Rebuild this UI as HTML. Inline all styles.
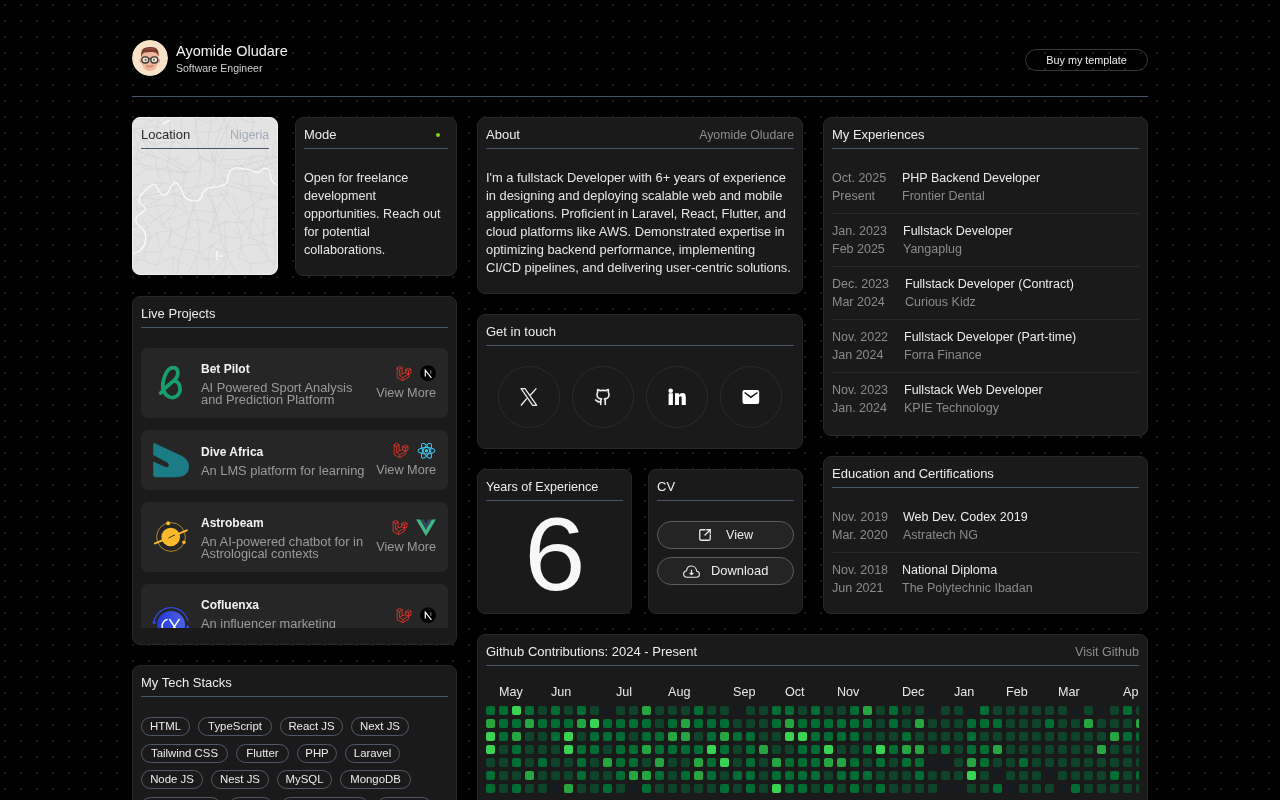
<!DOCTYPE html>
<html><head><meta charset="utf-8">
<style>
*{box-sizing:border-box;margin:0;padding:0}
html,body{width:1280px;height:800px;overflow:hidden;background:#000}
body{position:relative;will-change:transform;font-family:"Liberation Sans",sans-serif;color:#ececec;
background-image:linear-gradient(#000,#000);}
#dots{position:absolute;left:0;top:0;width:1280px;height:800px;
background-image:radial-gradient(circle at 5px 5px,#1b1b1b 0,#1b1b1b 1px,transparent 1.4px);
background-size:16px 16px}
.abs{position:absolute}
.card{position:absolute;background:#1a1a1a;border:1px solid #272727;border-radius:8px;overflow:hidden}
.hd{position:absolute;left:8px;right:8px;top:8px;height:23px;border-bottom:1px solid #4b5669;
font-size:13px;line-height:18px;display:flex;justify-content:space-between;white-space:nowrap}
.hd .r{color:#8d8d8d;font-size:12.3px}
.body{font-size:12.7px;line-height:18px;color:#e6e6e6;white-space:nowrap}
.gray{color:#8b8b8b}
.plist{position:absolute;left:8px;top:51px;width:307px;height:280px;overflow:hidden}
.pitem{position:relative;background:#262626;border-radius:7px;margin-bottom:12px;display:flex;align-items:center;white-space:nowrap}
.plogo{position:absolute;left:12px;top:50%;width:36px;height:36px;margin-top:-18px;display:flex;align-items:center;justify-content:center}
.plogo svg{flex:none}
.ptxt{position:absolute;left:60px;top:50%;transform:translateY(-50%)}
.pt{font-weight:700;font-size:12px;line-height:16px;color:#f2f2f2;margin-bottom:4.4px}
.pd{position:relative;top:0.9px;font-size:12.85px;line-height:12px;color:#9b9b9b}
.pr{position:absolute;right:12px;top:50%;transform:translateY(-50%);display:flex;flex-direction:column;align-items:flex-end}
.picons{display:flex;gap:8px;height:16px;align-items:center;margin-bottom:3.6px}
.vm{font-size:12.7px;line-height:16px;color:#9b9b9b}
.chip{position:absolute;height:19px;border:1px solid #4e5869;border-radius:10px;font-size:11.4px;line-height:17px;text-align:center;color:#ececec;white-space:nowrap}
.soc{position:absolute;top:51px;width:62px;height:62px;border:1px solid #2b2b2b;border-radius:50%}
.soc svg{position:absolute}
.cvb{position:absolute;left:8px;width:137px;height:28px;border:1px solid #5c5c5c;border-radius:14px;background:#242424;font-size:12.6px;line-height:26px;color:#ededed;white-space:nowrap}
.cvb svg,.cvb span{position:absolute}
.row{position:absolute;left:8px;right:8px;height:53px;padding-top:8px;display:flex;font-size:12.5px;line-height:18px;white-space:nowrap}
.row .d{color:#8b8b8b;flex:none}
.row .t{color:#ececec}
</style></head><body>
<div id="dots"></div>

<!-- header -->
<div class="abs" style="left:132px;top:40px;width:36px;height:36px;border-radius:50%;overflow:hidden"><svg width="36" height="36" viewBox="0 0 36 36" style="position:absolute;left:0;top:0">
<circle cx="18" cy="18" r="18" fill="#f9e3c8"/>
<g transform="translate(-1,-0.8)">
<ellipse cx="10" cy="21.5" rx="1.5" ry="2.3" fill="#e6a086"/>
<ellipse cx="27.6" cy="21.5" rx="1.5" ry="2.3" fill="#e6a086"/>
<path d="M10.6 15.5C10.6 11.8 13.6 10.4 18.6 10.4C23.6 10.4 27 12 27 16V22C27 27.5 23.4 31.8 18.8 31.8C14.2 31.8 10.6 27.6 10.6 22Z" fill="#f0b69b"/>
<path d="M15 29.6C17.5 31.2 20.5 31.2 22.6 29.6C21 31.6 16.6 31.6 15 29.6Z" fill="#e39c83"/>
<path d="M10.4 18.6C9.6 13.2 10.8 10 13.4 8.8C16.8 7.4 22 7.6 24.8 8.8C27.4 10.2 28 13.4 27.6 17.8C26.8 14.6 25.6 13.6 24.2 13.2C20.6 12.6 16.8 12.8 13.8 13.4C12 13.8 11 15.4 10.4 18.6Z" fill="#7b3b2c"/>
<path d="M12.6 10.6C15.6 8.6 21.6 8.4 25 10.2C21.6 9.8 16.6 10 12.6 10.6Z" fill="#9a5240"/>
<ellipse cx="14.2" cy="20.6" rx="2.6" ry="2" fill="#f6ede6"/><ellipse cx="23.4" cy="20.6" rx="2.6" ry="2" fill="#f6ede6"/>
<circle cx="14.6" cy="20.6" r="1.1" fill="#4f6a45"/><circle cx="23" cy="20.6" r="1.1" fill="#4f6a45"/>
<rect x="10.8" y="17.6" width="7" height="6.2" rx="3" fill="none" stroke="#3a3e43" stroke-width="1.3"/>
<rect x="19.8" y="17.6" width="7" height="6.2" rx="3" fill="none" stroke="#3a3e43" stroke-width="1.3"/>
<path d="M17.8 19.4H19.8" stroke="#3a3e43" stroke-width="1.2"/>
<path d="M15.4 26.6C17.4 28.2 20.2 28.2 22.2 26.6C20.2 27.1 17.4 27.1 15.4 26.6Z" fill="#fff" stroke="#b65d4b" stroke-width="0.7"/>
</g></svg></div>
<div class="abs" style="left:176px;top:42px;font-size:14.5px;line-height:18px;color:#f2f2f2;white-space:nowrap">Ayomide Oludare</div>
<div class="abs" style="left:176px;top:61px;font-size:10.5px;line-height:14px;color:#cfcfcf;white-space:nowrap">Software Engineer</div>
<div class="abs" style="left:1025px;top:49px;width:123px;height:22px;border:1px solid #3a3a3a;border-radius:11px;font-size:10.8px;line-height:20px;text-align:center;color:#ededed">Buy my template</div>
<div class="abs" style="left:132px;top:96px;width:1016px;height:1px;background:#4b5669"></div>

<!-- Location -->
<div class="card" style="left:132px;top:117px;width:146px;height:158px;background:#e4e4e4;border-color:#f0f0f0">
<svg width="146" height="158" viewBox="133 118 146 158" style="position:absolute;left:0;top:0">
<rect x="133" y="118" width="146" height="158" fill="#e3e3e3"/>
<path d="M119.5 105.6Q123.6 109.4 124.2 117.7M124.2 117.7Q125.7 116.8 133.0 119.6M124.2 117.7Q124.6 127.6 120.1 131.9M124.2 117.7Q128.4 124.8 132.6 128.8M120.1 131.9Q124.5 127.8 132.6 128.8M120.1 131.9Q115.7 138.3 116.8 144.1M116.8 144.1Q125.5 144.8 138.0 149.0M121.3 159.9Q126.2 162.2 136.4 159.1M121.3 159.9Q120.2 162.9 115.9 168.0M115.9 168.0Q124.2 164.7 131.2 167.3M115.9 168.0Q118.0 175.2 115.9 186.1M115.9 186.1Q121.6 180.4 130.9 178.7M115.9 186.1Q116.0 191.1 121.9 191.4M121.9 191.4Q122.8 203.1 124.8 213.6M124.8 213.6Q125.6 219.9 121.5 223.2M121.5 223.2Q131.9 226.6 137.6 225.5M121.5 223.2Q120.7 228.2 116.6 230.2M116.6 230.2Q121.3 230.9 128.0 232.1M116.6 230.2Q117.6 237.7 120.3 243.6M120.3 243.6Q117.6 252.0 116.9 258.4M116.9 258.4Q130.4 260.1 137.8 260.0M116.9 258.4Q117.7 268.9 115.3 273.6M116.9 258.4Q123.5 268.3 128.7 275.3M115.3 273.6Q119.3 272.6 128.7 275.3M115.3 273.6Q114.9 280.5 119.4 290.4M119.4 290.4Q130.4 288.0 135.8 284.7M133.2 106.4Q139.4 102.3 141.9 103.3M133.2 106.4Q134.6 110.3 133.0 119.6M133.0 119.6Q141.6 118.1 150.6 120.6M133.0 119.6Q133.5 121.6 132.6 128.8M132.6 128.8Q138.0 127.8 142.2 128.5M132.6 128.8Q136.2 139.2 138.0 149.0M138.0 149.0Q137.1 142.7 142.0 139.6M138.0 149.0Q135.1 155.5 136.4 159.1M136.4 159.1Q140.0 159.4 149.0 153.8M136.4 159.1Q143.9 163.9 146.6 169.5M131.2 167.3Q131.2 175.6 130.9 178.7M130.9 178.7Q139.5 173.8 146.6 169.5M135.7 195.0Q136.3 196.4 142.3 197.4M135.7 195.0Q135.7 202.4 136.5 207.9M136.5 207.9Q138.8 209.7 142.2 208.2M136.5 207.9Q140.0 219.4 137.6 225.5M137.6 225.5Q142.7 224.3 143.1 219.7M137.6 225.5Q131.9 227.4 128.0 232.1M128.0 232.1Q140.2 236.6 150.7 238.0M128.0 232.1Q131.0 242.8 137.1 247.7M137.1 247.7Q137.9 248.4 144.0 251.8M137.1 247.7Q138.2 251.5 137.8 260.0M137.1 247.7Q141.4 243.9 150.7 238.0M137.8 260.0Q141.2 259.2 143.1 259.9M137.8 260.0Q131.5 266.7 128.7 275.3M128.7 275.3Q136.9 277.2 149.5 275.4M128.7 275.3Q133.9 278.3 135.8 284.7M141.9 103.3Q151.9 101.9 156.1 102.6M141.9 103.3Q147.7 114.5 150.6 120.6M150.6 120.6Q153.8 120.7 161.7 116.3M150.6 120.6Q143.9 124.9 142.2 128.5M142.2 128.5Q151.2 125.1 157.0 126.7M142.2 128.5Q143.1 131.5 142.0 139.6M142.0 139.6Q147.2 140.1 154.9 144.8M142.0 139.6Q146.8 145.9 149.0 153.8M142.0 139.6Q150.5 149.2 156.4 158.0M146.6 169.5Q151.1 168.9 157.7 169.5M142.9 185.3Q152.4 183.3 163.6 182.8M142.9 185.3Q141.9 189.5 142.3 197.4M142.3 197.4Q153.0 198.9 159.7 199.7M142.3 197.4Q143.8 205.1 142.2 208.2M142.3 197.4Q153.0 190.4 163.6 182.8M142.2 208.2Q151.8 207.8 155.8 205.5M142.2 208.2Q152.9 218.4 163.1 225.2M142.2 208.2Q148.4 205.4 159.7 199.7M143.1 219.7Q147.7 226.7 150.7 238.0M150.7 238.0Q151.9 236.6 156.5 231.9M150.7 238.0Q149.0 244.3 144.0 251.8M144.0 251.8Q152.7 252.4 161.4 252.4M144.0 251.8Q144.8 258.4 143.1 259.9M143.1 259.9Q151.7 264.6 156.0 265.5M149.5 275.4Q156.3 276.5 162.8 275.0M142.0 291.9Q151.6 290.4 158.2 283.0M156.1 102.6Q160.0 105.7 167.4 109.6M156.1 102.6Q161.7 106.8 161.7 116.3M161.7 116.3Q166.4 119.8 169.4 120.0M161.7 116.3Q156.7 121.3 157.0 126.7M157.0 126.7Q160.9 128.6 169.6 134.2M157.0 126.7Q154.3 137.1 154.9 144.8M154.9 144.8Q162.6 141.4 173.0 141.9M156.4 158.0Q155.6 166.1 157.7 169.5M157.7 169.5Q165.4 168.3 167.7 167.3M157.7 169.5Q158.0 178.9 163.6 182.8M163.6 182.8Q168.2 183.3 172.6 186.5M159.7 199.7Q166.3 196.0 173.1 193.8M155.8 205.5Q163.9 204.7 176.2 206.0M155.8 205.5Q161.7 215.5 163.1 225.2M163.1 225.2Q165.3 220.3 167.2 219.7M163.1 225.2Q169.2 230.0 171.5 230.6M156.5 231.9Q162.6 232.6 171.5 230.6M156.5 231.9Q158.8 242.0 161.4 252.4M161.4 252.4Q160.4 258.5 156.0 265.5M161.4 252.4Q168.4 239.8 171.5 230.6M156.0 265.5Q164.5 259.4 172.7 257.3M162.8 275.0Q165.6 276.3 170.6 277.9M162.8 275.0Q159.7 280.2 158.2 283.0M162.8 275.0Q169.2 281.6 176.8 288.6M167.4 109.6Q176.4 109.0 186.9 105.8M167.4 109.6Q168.8 114.6 169.4 120.0M167.4 109.6Q177.3 113.3 181.4 113.4M169.4 120.0Q176.1 115.4 181.4 113.4M169.4 120.0Q169.7 125.9 169.6 134.2M169.6 134.2Q173.4 132.9 180.2 135.1M169.6 134.2Q170.2 140.8 173.0 141.9M173.0 141.9Q181.9 142.8 187.0 148.6M173.0 141.9Q168.4 151.6 168.8 159.2M173.0 141.9Q176.0 140.5 180.2 135.1M168.8 159.2Q172.0 157.1 180.2 158.4M168.8 159.2Q166.0 162.7 167.7 167.3M168.8 159.2Q179.3 165.3 184.8 172.3M167.7 167.3Q177.9 171.7 184.8 172.3M167.7 167.3Q169.1 176.4 172.6 186.5M167.7 167.3Q174.8 178.8 183.2 188.0M172.6 186.5Q173.5 187.3 173.1 193.8M173.1 193.8Q174.6 194.4 180.8 196.5M173.1 193.8Q176.4 201.9 176.2 206.0M173.1 193.8Q179.8 193.3 183.2 188.0M176.2 206.0Q180.9 209.5 187.4 213.0M176.2 206.0Q173.0 215.8 167.2 219.7M167.2 219.7Q172.0 225.9 171.5 230.6M167.2 219.7Q175.7 216.8 187.4 213.0M171.5 230.6Q178.7 237.5 187.9 239.2M171.5 230.6Q169.9 236.4 168.8 246.7M171.5 230.6Q181.8 227.6 187.4 224.0M168.8 246.7Q176.5 246.9 183.5 249.9M172.7 257.3Q178.6 263.0 189.0 264.7M172.7 257.3Q174.1 266.1 170.6 277.9M170.6 277.9Q177.7 274.9 184.2 276.9M170.6 277.9Q171.8 286.2 176.8 288.6M176.8 288.6Q183.7 289.6 188.6 287.7M186.9 105.8Q194.9 101.9 199.2 103.8M186.9 105.8Q184.0 107.5 181.4 113.4M181.4 113.4Q188.2 116.3 198.8 119.1M181.4 113.4Q181.2 123.2 180.2 135.1M181.4 113.4Q191.4 106.5 199.2 103.8M180.2 135.1Q183.4 141.3 187.0 148.6M184.8 172.3Q195.0 171.7 200.4 170.8M184.8 172.3Q183.6 182.6 183.2 188.0M184.8 172.3Q193.9 166.5 200.3 155.9M183.2 188.0Q190.9 188.7 197.4 186.4M183.2 188.0Q182.5 189.6 180.8 196.5M183.2 188.0Q188.2 193.3 193.8 198.5M180.8 196.5Q188.5 197.6 193.8 198.5M180.8 196.5Q182.9 204.1 187.4 213.0M180.8 196.5Q191.5 194.2 197.4 186.4M187.4 213.0Q192.5 211.0 193.3 210.0M187.4 224.0Q195.0 219.3 197.8 219.3M187.4 224.0Q193.9 232.2 200.0 235.0M187.4 224.0Q188.8 215.8 193.3 210.0M187.9 239.2Q191.3 239.4 200.0 235.0M183.5 249.9Q188.6 248.2 199.1 252.2M184.2 276.9Q192.6 278.7 196.0 275.8M184.2 276.9Q188.4 281.4 188.6 287.7M184.2 276.9Q192.1 269.5 195.6 256.1M188.6 287.7Q192.6 283.9 195.0 283.7M199.2 103.8Q204.8 106.6 215.1 106.6M199.2 103.8Q201.4 113.7 198.8 119.1M198.8 119.1Q205.8 123.1 210.4 121.9M198.8 119.1Q193.8 124.1 193.8 132.4M193.8 132.4Q199.6 130.9 209.3 132.7M193.8 132.4Q200.1 139.3 202.9 147.8M202.9 147.8Q203.8 144.4 208.0 143.3M200.3 155.9Q204.7 161.4 214.1 161.1M200.3 155.9Q200.5 163.5 200.4 170.8M200.3 155.9Q208.1 161.1 214.8 168.8M200.4 170.8Q197.6 180.1 197.4 186.4M197.4 186.4Q202.7 186.2 211.8 181.2M197.4 186.4Q202.2 192.7 207.4 196.0M193.8 198.5Q191.6 204.6 193.3 210.0M193.3 210.0Q205.5 211.4 214.4 212.5M193.3 210.0Q197.6 215.8 197.8 219.3M197.8 219.3Q207.1 220.9 213.1 226.5M197.8 219.3Q197.3 226.8 200.0 235.0M200.0 235.0Q199.5 241.9 199.1 252.2M199.1 252.2Q205.4 250.3 210.5 245.8M199.1 252.2Q199.6 252.2 195.6 256.1M199.1 252.2Q200.7 256.1 208.1 260.1M195.6 256.1Q200.4 259.9 208.1 260.1M195.6 256.1Q198.2 266.4 196.0 275.8M196.0 275.8Q202.0 273.7 212.3 273.9M196.0 275.8Q194.4 280.5 195.0 283.7M195.0 283.7Q199.6 289.0 209.2 290.4M195.0 283.7Q202.2 276.8 212.3 273.9M215.1 106.6Q223.9 107.3 228.8 104.5M215.1 106.6Q212.2 113.4 210.4 121.9M210.4 121.9Q209.8 128.9 209.3 132.7M210.4 121.9Q219.4 114.7 228.8 104.5M209.3 132.7Q216.9 131.9 227.7 126.4M209.3 132.7Q208.0 136.8 208.0 143.3M209.3 132.7Q211.7 126.0 219.7 113.3M208.0 143.3Q209.4 150.7 214.1 161.1M214.1 161.1Q220.7 159.7 222.1 159.9M214.1 161.1Q217.3 165.7 214.8 168.8M214.1 161.1Q216.0 164.6 219.2 166.4M214.1 161.1Q219.1 154.1 226.1 144.7M214.8 168.8Q215.6 174.8 211.8 181.2M211.8 181.2Q219.4 178.0 223.5 178.2M211.8 181.2Q207.7 188.9 207.4 196.0M211.8 181.2Q217.8 185.6 227.3 193.4M207.4 196.0Q217.0 197.6 227.3 193.4M207.4 196.0Q213.0 202.5 214.4 212.5M207.4 196.0Q216.6 186.3 223.5 178.2M214.4 212.5Q214.5 206.6 220.4 204.5M214.4 212.5Q213.1 222.0 213.1 226.5M213.1 226.5Q217.1 226.6 225.3 221.5M213.1 226.5Q212.5 230.4 208.8 231.7M213.1 226.5Q215.7 214.8 220.4 204.5M208.8 231.7Q219.3 233.1 225.3 236.6M208.8 231.7Q216.4 225.0 225.3 221.5M210.5 245.8Q216.7 249.7 227.1 252.6M210.5 245.8Q208.2 252.5 208.1 260.1M210.5 245.8Q219.1 239.7 225.3 236.6M208.1 260.1Q218.0 256.9 225.8 258.0M208.1 260.1Q208.9 268.3 212.3 273.9M212.3 273.9Q209.5 281.2 209.2 290.4M212.3 273.9Q216.2 266.7 225.8 258.0M209.2 290.4Q216.0 291.4 219.1 286.7M228.8 104.5Q236.5 101.5 239.1 101.8M228.8 104.5Q225.3 111.7 219.7 113.3M219.7 113.3Q228.0 112.4 234.7 116.5M219.7 113.3Q223.1 117.2 227.7 126.4M227.7 126.4Q232.0 126.8 239.0 131.2M227.7 126.4Q226.8 133.6 226.1 144.7M226.1 144.7Q231.2 145.2 238.1 146.6M226.1 144.7Q224.6 153.5 222.1 159.9M222.1 159.9Q228.4 159.1 235.9 159.9M222.1 159.9Q220.1 160.5 219.2 166.4M219.2 166.4Q229.1 164.6 241.1 165.9M219.2 166.4Q220.5 174.7 223.5 178.2M223.5 178.2Q230.6 181.6 241.3 185.2M223.5 178.2Q228.2 185.0 227.3 193.4M227.3 193.4Q224.6 198.4 220.4 204.5M225.3 221.5Q228.3 222.1 235.8 222.7M225.3 221.5Q224.5 231.9 225.3 236.6M225.3 221.5Q231.2 228.1 240.8 238.0M225.3 236.6Q230.1 237.5 240.8 238.0M225.3 236.6Q224.6 244.5 227.1 252.6M227.1 252.6Q234.6 252.1 241.4 247.6M225.8 258.0Q226.1 265.6 223.8 270.8M223.8 270.8Q222.2 278.7 219.1 286.7M219.1 286.7Q230.3 288.2 238.4 289.2M239.1 101.8Q242.1 103.5 247.1 109.0M239.1 101.8Q234.7 106.5 234.7 116.5M239.1 101.8Q244.6 113.5 254.8 122.8M234.7 116.5Q244.5 121.2 254.8 122.8M234.7 116.5Q234.8 126.0 239.0 131.2M234.7 116.5Q239.5 112.8 247.1 109.0M239.0 131.2Q239.9 137.4 238.1 146.6M238.1 146.6Q244.7 149.4 248.2 148.1M235.9 159.9Q245.5 159.7 253.6 155.5M235.9 159.9Q240.1 165.7 245.8 169.4M241.1 165.9Q240.5 168.2 245.8 169.4M241.1 165.9Q248.4 160.2 253.6 155.5M241.3 185.2Q245.3 188.1 250.5 185.7M241.3 185.2Q246.9 186.0 249.9 191.3M241.3 185.2Q242.3 178.7 245.8 169.4M233.3 195.5Q234.8 201.5 238.3 213.1M238.3 213.1Q244.5 210.7 253.1 204.6M235.8 222.7Q246.0 223.6 253.0 218.7M235.8 222.7Q239.4 230.6 240.8 238.0M235.8 222.7Q242.5 211.3 253.1 204.6M240.8 238.0Q241.0 240.5 241.4 247.6M240.8 238.0Q247.3 226.2 253.0 218.7M241.4 247.6Q242.6 244.4 246.4 244.5M241.4 247.6Q239.2 251.4 238.5 258.0M241.4 247.6Q243.2 257.8 250.2 263.2M238.5 258.0Q242.4 260.5 250.2 263.2M239.2 277.2Q245.8 278.4 253.4 275.9M239.2 277.2Q236.2 283.5 238.4 289.2M238.4 289.2Q249.1 290.2 254.5 286.9M247.1 109.0Q259.3 106.3 267.5 100.9M247.1 109.0Q248.1 113.9 254.8 122.8M247.1 109.0Q251.1 112.8 260.2 118.3M254.8 122.8Q252.7 125.4 250.4 133.9M250.4 133.9Q255.8 135.5 260.9 133.3M253.6 155.5Q262.7 156.0 266.4 157.6M253.6 155.5Q248.2 164.9 245.8 169.4M253.6 155.5Q257.8 160.5 261.1 168.8M245.8 169.4Q254.4 171.0 261.1 168.8M245.8 169.4Q249.0 176.7 250.5 185.7M250.5 185.7Q256.0 185.4 266.5 187.0M250.5 185.7Q248.5 189.9 249.9 191.3M249.9 191.3Q252.6 193.3 260.1 199.5M249.9 191.3Q251.1 195.0 253.1 204.6M253.1 204.6Q260.6 209.7 267.7 209.2M253.1 204.6Q255.3 210.6 253.0 218.7M253.1 204.6Q259.5 201.7 260.1 199.5M253.0 218.7Q250.1 229.5 248.4 237.9M253.0 218.7Q256.8 227.9 263.4 235.0M248.4 237.9Q254.0 235.6 263.4 235.0M248.4 237.9Q257.0 239.8 264.1 243.3M246.4 244.5Q255.9 246.2 264.1 243.3M250.2 263.2Q256.6 264.2 267.7 261.2M250.2 263.2Q251.5 270.6 253.4 275.9M253.4 275.9Q258.3 276.9 262.0 277.0M253.4 275.9Q251.1 282.2 254.5 286.9M254.5 286.9Q261.6 284.8 263.6 286.9M267.5 100.9Q262.7 111.0 260.2 118.3M260.2 118.3Q270.5 115.5 276.4 117.1M260.9 133.3Q265.3 140.7 264.4 144.2M264.4 144.2Q267.6 152.2 266.4 157.6M266.4 157.6Q269.6 159.2 272.3 156.3M266.4 157.6Q262.5 164.1 261.1 168.8M266.4 157.6Q273.1 167.5 279.2 174.0M261.1 168.8Q271.9 173.5 279.2 174.0M266.5 187.0Q262.5 190.9 260.1 199.5M266.5 187.0Q268.8 194.3 272.9 197.2M260.1 199.5Q264.6 197.7 272.9 197.2M267.7 209.2Q276.9 205.5 280.3 205.3M267.7 209.2Q268.0 215.5 263.7 219.0M263.7 219.0Q268.4 217.2 278.8 217.2M263.7 219.0Q264.3 225.7 263.4 235.0M263.4 235.0Q265.9 234.8 272.9 232.3M263.4 235.0Q261.5 236.9 264.1 243.3M264.1 243.3Q269.1 247.7 277.9 246.2M264.1 243.3Q267.3 251.4 267.7 261.2M267.7 261.2Q271.9 261.2 274.6 262.2M262.0 277.0Q269.7 275.7 272.0 276.3M262.0 277.0Q261.2 282.4 263.6 286.9M263.6 286.9Q270.1 288.1 272.2 287.1M277.9 100.7Q278.6 109.5 276.4 117.1M276.4 117.1Q282.4 115.9 289.3 117.4M276.4 117.1Q281.2 124.9 280.6 135.2M280.6 135.2Q283.6 130.5 287.8 130.1M273.7 143.7Q283.4 144.3 289.3 140.6M273.7 143.7Q273.3 147.6 272.3 156.3M273.7 143.7Q279.9 136.2 287.8 130.1M272.3 156.3Q280.2 156.4 286.0 158.3M272.3 156.3Q281.6 148.3 289.3 140.6M279.2 174.0Q284.6 171.0 290.4 170.3M279.2 174.0Q278.1 180.4 275.8 181.2M275.8 181.2Q286.1 183.5 292.5 184.1M275.8 181.2Q277.3 186.6 272.9 197.2M272.9 197.2Q281.0 198.2 292.6 193.3M272.9 197.2Q275.8 199.1 280.3 205.3M280.3 205.3Q283.8 209.6 291.4 212.1M280.3 205.3Q281.0 209.8 278.8 217.2M278.8 217.2Q275.7 221.8 272.9 232.3M272.9 232.3Q274.5 239.5 277.9 246.2M272.9 232.3Q284.7 225.0 293.0 220.2M277.9 246.2Q279.8 250.0 286.2 253.0M277.9 246.2Q273.7 254.3 274.6 262.2M274.6 262.2Q283.2 257.1 292.9 257.3M274.6 262.2Q273.0 269.6 272.0 276.3M272.0 276.3Q281.3 274.2 286.4 276.3M272.2 287.1Q281.6 287.8 286.6 283.0M286.5 102.0Q285.8 111.6 289.3 117.4M289.3 117.4Q289.8 121.7 287.8 130.1M287.8 130.1Q285.7 133.0 289.3 140.6M289.3 140.6Q290.5 150.3 286.0 158.3M290.4 170.3Q290.9 174.7 292.5 184.1M292.5 184.1Q290.2 191.2 292.6 193.3M292.6 193.3Q291.9 203.6 291.4 212.1M287.1 239.2Q286.7 248.5 286.2 253.0M286.2 253.0Q288.3 256.6 292.9 257.3M292.9 257.3Q288.8 266.4 286.4 276.3M286.4 276.3Q285.6 279.2 286.6 283.0" fill="none" stroke="#d1d1d1" stroke-width="0.55"/>
<path d="M205.0 178.0L226.3 172.7L248.3 171.0L269.3 164.6L290.4 158.4L311.7 152.8L332.7 146.1L352.5 136.6L370.1 123.3M205.0 178.0L226.0 184.6L247.0 191.0L268.7 194.6L289.8 200.8L311.0 206.9L333.0 207.7L355.0 207.4L376.4 212.2M205.0 178.0L221.1 192.9L233.4 211.2L246.9 228.6L259.6 246.6L273.3 263.7L288.8 279.4L303.3 295.9L317.1 313.1M205.0 178.0L211.5 199.0L217.8 220.1L221.4 241.8L229.7 262.2L242.0 280.4L256.4 297.0L272.7 311.9L286.6 328.9M205.0 178.0L196.9 198.5L189.9 219.3L185.1 240.8L178.5 261.8L176.2 283.6L168.8 304.4L158.1 323.6L149.1 343.6M205.0 178.0L189.8 193.9L172.6 207.6L154.3 219.9L139.3 235.9L122.3 249.9L108.8 267.3L94.3 283.8L79.3 299.9M205.0 178.0L183.5 182.6L163.6 192.1L142.2 197.1L120.3 199.4L98.4 200.8L77.4 207.5L55.8 211.7L34.4 216.8M205.0 178.0L184.1 171.2L165.0 160.2L144.1 153.5L124.2 144.0L104.2 135.0L85.4 123.6L65.9 113.3L46.2 103.5M205.0 178.0L183.6 172.9L161.8 169.8L140.6 164.2L118.6 163.2L96.8 166.4L74.8 165.9L52.9 163.6L31.1 160.8M205.0 178.0L186.3 166.5L166.5 156.8L149.5 142.8L132.9 128.4L119.6 110.9L104.0 95.4L87.7 80.6L71.7 65.5M205.0 178.0L199.0 156.8L197.0 134.9L194.7 113.0L187.4 92.3L179.4 71.8L170.2 51.8L162.7 31.1L159.8 9.3M205.0 178.0L211.9 157.1L217.5 135.8L226.1 115.6L230.5 94.0L237.5 73.2L240.9 51.4L245.3 29.9L246.4 7.9M205.0 178.0L214.4 158.1L222.4 137.6L231.2 117.5L240.3 97.4L248.2 76.9L256.9 56.7L268.9 38.2L279.5 19.0M205.0 178.0L225.0 168.9L246.7 164.9L267.9 159.0L289.5 155.2L310.5 148.6L330.6 139.6L351.5 132.9L372.7 127.0" fill="none" stroke="#d0d0d0" stroke-width="0.6" stroke-dasharray="0 18 200"/>
<path d="M278 185.2C277.0 184.5 273.5 183.5 272 181C270.5 178.5 270.6 172.0 269 170C267.4 168.0 264.5 168.3 262.7 168.75C260.9 169.2 260.4 172.6 258 172.7C255.7 172.8 252.5 170.3 248.6 169.5C244.7 168.7 237.9 167.3 234.6 168C231.3 168.7 230.3 170.9 229 173.4C227.7 175.9 228.2 180.7 226.75 182.8C225.3 184.9 223.6 185.1 220.5 186C217.4 186.9 210.9 187.3 208 188.3C205.1 189.3 204.6 190.4 203.3 192.2C202.0 194.0 202.0 197.8 200.2 199.2C198.4 200.6 195.0 201.2 192.4 200.8C189.8 200.4 186.7 199.4 184.6 196.9C182.5 194.4 181.5 188.3 179.9 186C178.3 183.7 176.8 182.6 175.2 182.8C173.6 183.1 172.1 185.4 170.5 187.5C168.9 189.6 167.6 194.5 165.8 195.3C164.0 196.1 161.4 194.0 159.6 192.2C157.8 190.4 156.5 185.4 154.9 184.4C153.3 183.4 152.5 184.2 150.2 186C147.8 187.8 142.6 192.7 140.8 195.3C139.0 197.9 138.5 199.2 139.25 201.6C140.0 203.9 145.8 207.1 145.5 209.4C145.2 211.7 139.3 213.5 137.7 215.6C136.1 217.7 135.0 219.3 136.1 221.9C137.2 224.5 142.4 227.9 144 231C145.6 234.1 146.0 237.4 145.5 240.6C145.0 243.8 142.6 247.9 140.8 250C139.0 252.1 136.7 252.0 134.6 253C132.5 254.0 129.1 255.5 128 256" fill="none" stroke="#fbfbfb" stroke-width="1.2"/>
<path d="M163 124L170 120M217 251V260M219 256H223" stroke="#f7f7f7" stroke-width="1.6"/>
</svg>
  <div class="hd" style="border-bottom-color:#4b5669"><span style="color:#2b2b2b">Location</span><span class="r" style="color:#a3acbb">Nigeria</span></div>
</div>

<!-- Mode -->
<div class="card" style="left:295px;top:117px;width:162px;height:159px">
  <div class="hd"><span>Mode</span><span style="display:block;width:4px;height:4px;border-radius:50%;background:#7bd31e;margin:7px 8px 0 0"></span></div>
  <div class="body abs" style="left:8px;top:51px;font-size:12.6px">Open for freelance<br>development<br>opportunities. Reach out<br>for potential<br>collaborations.</div>
</div>

<!-- Live projects -->
<div class="card" style="left:132px;top:296px;width:325px;height:349px">
  <div class="hd"><span>Live Projects</span></div>
<div class="plist">
<div class="pitem" style="height:70px"><div class="plogo"><svg width="36" height="40" viewBox="0 0 36 40" fill="none" stroke="#18a06c" stroke-width="3.7" stroke-linecap="round" stroke-linejoin="round"><g transform="translate(-3.3,-5.6)"><path d="M10.9 35.6L13.6 33.6C11.6 25 16.25 10 23.75 10.3C29.4 10.6 29.4 18.1 25 22.5L15.5 30.6"/><path d="M25 23.5C30.6 25 32.5 33.75 27.5 38.2C22.5 42.6 15.6 38.75 14.5 33.8"/></g></svg></div><div class="ptxt"><div class="pt">Bet Pilot</div><div class="pd">AI Powered Sport Analysis<br>and Prediction Platform</div></div><div class="pr"><div class="picons"><svg width="16" height="16" viewBox="0 0 17 17" fill="none" stroke="#e0352b" stroke-width="0.95" stroke-linejoin="round" stroke-linecap="round"><path d="M1.25 2.9L3.9 1.25L6.5 2.75L3.9 4.4Z M1.25 2.9V13.25L7.25 16.4L13.6 12.5V9.3 M3.9 4.4V11L7.25 13.25L13.6 9.3 M6.5 2.75V9.1L10.25 8 M7.25 16.4V13.25 M10.25 4.6L13.25 3.1L16 4.4L13.25 5.9Z M10.25 4.6V8L13.4 9.3L15.9 8.4V4.4 M13.25 5.9V9.3 M3.9 11L6.5 9.1"/></svg><svg width="16" height="16" viewBox="0 0 16 16"><circle cx="8" cy="8" r="8" fill="#000"/><path d="M5.3 11.2V5 L11.4 12.6" stroke="#fff" stroke-width="1.2" fill="none"/><path d="M10.8 5V8.6" stroke="#fff" stroke-width="0.9" fill="none" opacity="0.6"/></svg></div><div class="vm">View More</div></div></div>
<div class="pitem" style="height:60px"><div class="plogo"><svg width="36" height="36" viewBox="5 4.5 36 36"><path d="M5.2 7Q5.2 5 7.2 5.9L32 17.5C38 20.5 41 24 41 29C41 36 36 39.7 27.6 39.7L8 39.7Q5.2 39.7 5.2 37L5.2 24L17.5 29.6C20 30.6 22.5 27 19.5 25.2L5.2 17.5Z" fill="#1b7c86"/></svg></div><div class="ptxt"><div class="pt">Dive Africa</div><div class="pd">An LMS platform for learning</div></div><div class="pr"><div class="picons"><svg width="16" height="16" viewBox="0 0 17 17" fill="none" stroke="#e0352b" stroke-width="0.95" stroke-linejoin="round" stroke-linecap="round"><path d="M1.25 2.9L3.9 1.25L6.5 2.75L3.9 4.4Z M1.25 2.9V13.25L7.25 16.4L13.6 12.5V9.3 M3.9 4.4V11L7.25 13.25L13.6 9.3 M6.5 2.75V9.1L10.25 8 M7.25 16.4V13.25 M10.25 4.6L13.25 3.1L16 4.4L13.25 5.9Z M10.25 4.6V8L13.4 9.3L15.9 8.4V4.4 M13.25 5.9V9.3 M3.9 11L6.5 9.1"/></svg><svg width="19" height="17" viewBox="-10 -9 20 18" fill="none" stroke="#3fc6ef" stroke-width="1.1"><ellipse rx="9" ry="3.4"/><ellipse rx="9" ry="3.4" transform="rotate(60)"/><ellipse rx="9" ry="3.4" transform="rotate(120)"/><circle r="1.8" fill="#3fc6ef" stroke="none"/></svg></div><div class="vm">View More</div></div></div>
<div class="pitem" style="height:70px"><div class="plogo"><svg width="36" height="36" viewBox="5.6 5.6 36 36"><circle cx="23.6" cy="23.6" r="14.4" fill="none" stroke="#d9a02a" stroke-width="0.75"/><circle cx="23.3" cy="23.6" r="9.3" fill="#fbb829"/><path d="M7.6 30L39.4 17" stroke="#fbb829" stroke-width="2.1" stroke-linecap="round"/><path d="M21 24.6L27.6 21.4" stroke="#262626" stroke-width="0.9"/><circle cx="20.7" cy="9.8" r="2" fill="#fbb829"/><circle cx="36.5" cy="28.8" r="1.8" fill="#fbb829"/></svg></div><div class="ptxt"><div class="pt">Astrobeam</div><div class="pd">An AI-powered chatbot for in<br>Astrological contexts</div></div><div class="pr"><div class="picons"><svg width="16" height="16" viewBox="0 0 17 17" fill="none" stroke="#e0352b" stroke-width="0.95" stroke-linejoin="round" stroke-linecap="round"><path d="M1.25 2.9L3.9 1.25L6.5 2.75L3.9 4.4Z M1.25 2.9V13.25L7.25 16.4L13.6 12.5V9.3 M3.9 4.4V11L7.25 13.25L13.6 9.3 M6.5 2.75V9.1L10.25 8 M7.25 16.4V13.25 M10.25 4.6L13.25 3.1L16 4.4L13.25 5.9Z M10.25 4.6V8L13.4 9.3L15.9 8.4V4.4 M13.25 5.9V9.3 M3.9 11L6.5 9.1"/></svg><svg width="20" height="17" viewBox="0 0 20 17"><path d="M0 0H4L10 10.3L16 0H20L10 17Z" fill="#41b883"/><path d="M4 0H7.4L10 4.5L12.6 0H16L10 10.3Z" fill="#35495e"/></svg></div><div class="vm">View More</div></div></div>
<div class="pitem" style="height:82px"><div class="plogo"><svg width="40" height="40" viewBox="-20 -20 40 40"><defs><linearGradient id="cg" x1="0" x2="1" y1="0" y2="0"><stop offset="0" stop-color="#2337d6"/><stop offset="1" stop-color="#4b64e6"/></linearGradient></defs><path d="M-17 -4A17.5 17.5 0 0 1 17 -4" fill="none" stroke="#2f49e2" stroke-width="1.3"/><circle cx="-16.8" cy="-2.6" r="1.6" fill="#2f49e2"/><circle cx="16.6" cy="2.2" r="1.6" fill="#2f49e2"/><circle r="14" fill="url(#cg)"/><path d="M-3.4 -5.6A6.8 6.8 0 0 0 -7.6 5" stroke="#fff" stroke-width="1.4" fill="none"/><path d="M-1.6 -6L7.6 8 M8.4 -6L-0.8 8" stroke="#fff" stroke-width="1.4"/></svg></div><div class="ptxt"><div class="pt">Cofluenxa</div><div class="pd">An influencer marketing<br>platform for brands<br>and creators</div></div><div class="pr"><div class="picons"><svg width="16" height="16" viewBox="0 0 17 17" fill="none" stroke="#e0352b" stroke-width="0.95" stroke-linejoin="round" stroke-linecap="round"><path d="M1.25 2.9L3.9 1.25L6.5 2.75L3.9 4.4Z M1.25 2.9V13.25L7.25 16.4L13.6 12.5V9.3 M3.9 4.4V11L7.25 13.25L13.6 9.3 M6.5 2.75V9.1L10.25 8 M7.25 16.4V13.25 M10.25 4.6L13.25 3.1L16 4.4L13.25 5.9Z M10.25 4.6V8L13.4 9.3L15.9 8.4V4.4 M13.25 5.9V9.3 M3.9 11L6.5 9.1"/></svg><svg width="16" height="16" viewBox="0 0 16 16"><circle cx="8" cy="8" r="8" fill="#000"/><path d="M5.3 11.2V5 L11.4 12.6" stroke="#fff" stroke-width="1.2" fill="none"/><path d="M10.8 5V8.6" stroke="#fff" stroke-width="0.9" fill="none" opacity="0.6"/></svg></div><div class="vm">View More</div></div></div>
</div>
</div>

<!-- Tech stacks -->
<div class="card" style="left:132px;top:665px;width:325px;height:200px">
  <div class="hd"><span>My Tech Stacks</span></div>
<div class="chip" style="left:8px;top:51px;width:49px">HTML</div><div class="chip" style="left:65px;top:51px;width:74px">TypeScript</div><div class="chip" style="left:147px;top:51px;width:63px">React JS</div><div class="chip" style="left:218px;top:51px;width:58px">Next JS</div><div class="chip" style="left:8px;top:78px;width:87px">Tailwind CSS</div><div class="chip" style="left:103px;top:78px;width:53px">Flutter</div><div class="chip" style="left:164px;top:78px;width:40px">PHP</div><div class="chip" style="left:212px;top:78px;width:55px">Laravel</div><div class="chip" style="left:8px;top:104px;width:62px">Node JS</div><div class="chip" style="left:78px;top:104px;width:58px">Nest JS</div><div class="chip" style="left:144px;top:104px;width:55px">MySQL</div><div class="chip" style="left:207px;top:104px;width:71px">MongoDB</div><div class="chip" style="left:8px;top:131px;width:80px">Express JS</div><div class="chip" style="left:96px;top:131px;width:44px">AWS</div><div class="chip" style="left:148px;top:131px;width:88px">Firebase Cloud</div><div class="chip" style="left:244px;top:131px;width:55px">Docker</div>

</div>

<!-- About -->
<div class="card" style="left:477px;top:117px;width:326px;height:177px">
  <div class="hd"><span>About</span><span class="r">Ayomide Oludare</span></div>
  <div class="body abs" style="left:8px;top:51px;font-size:12.85px">I'm a fullstack Developer with 6+ years of experience<br>in designing and deploying scalable web and mobile<br>applications. Proficient in Laravel, React, Flutter, and<br>cloud platforms like AWS. Demonstrated expertise in<br>optimizing backend performance, implementing<br>CI/CD pipelines, and delivering user-centric solutions.</div>
</div>

<!-- Get in touch -->
<div class="card" style="left:477px;top:314px;width:326px;height:135px">
  <div class="hd"><span>Get in touch</span></div>
<div class="soc" style="left:20px"><svg width="30" height="28" viewBox="0 0 30 28" style="left:16px;top:16px" fill="none" stroke="#ececec"><path d="M6.1 5.6H10L21.7 22.4H17.7Z" stroke-width="1.25" stroke-linejoin="round"/><path d="M21.4 5.4L15.2 12.2M11.9 15.4L5.9 22.5" stroke-width="1.35"/></svg></div><div class="soc" style="left:94px"><svg width="18" height="18" viewBox="0 0 24 24" style="left:21px;top:21px" fill="none" stroke="#ececec" stroke-width="2.2" stroke-linecap="round" stroke-linejoin="round"><path d="M15 22v-4a4.8 4.8 0 0 0-1-3.5c3 0 6-2 6-5.5.08-1.25-.27-2.48-1-3.5.28-1.15.28-2.35 0-3.5 0 0-1 0-3 1.5-2.64-.5-5.36-.5-8 0C6 2 5 2 5 2c-.3 1.15-.3 2.35 0 3.5A5.403 5.403 0 0 0 4 9c0 3.5 3 5.5 6 5.5-.39.49-.68 1.05-.85 1.65-.17.6-.22 1.23-.15 1.85v4"/><path d="M9 18c-4.51 2-5-2-7-2"/></svg></div><div class="soc" style="left:168px"><svg width="18" height="17" viewBox="0 0 18 17" style="left:21px;top:21px"><circle cx="2.7" cy="2.7" r="2.3" fill="#fff"/><rect x="0.6" y="5.3" width="4.3" height="12" rx="0.3" fill="#fff"/><path d="M7 5.3H11V7C11.8 5.8 13 5.1 14.6 5.1C17 5.1 17.8 6.8 17.8 9.3V17.3H13.7V10.2C13.7 9 13.3 8.3 12.3 8.3C11.3 8.3 11 9 11 10.2V17.3H7Z" fill="#fff"/></svg></div><div class="soc" style="left:242px"><svg width="18" height="15" viewBox="0 0 18 15" style="left:21px;top:22px"><rect x="0.5" y="0.9" width="16.7" height="14" rx="2" fill="#fff"/><path d="M2.6 3.5L8.9 8.2L15.5 3.5" stroke="#1a1a1a" stroke-width="1.5" fill="none"/></svg></div>

</div>

<!-- Years -->
<div class="card" style="left:477px;top:469px;width:155px;height:145px">
  <div class="hd"><span style="font-size:12.6px">Years of Experience</span></div>
<div class="abs" style="left:0;width:153px;top:32px;text-align:center;font-size:104px;line-height:104px;color:#f7f7f7"><span style="display:inline-block;transform:scaleX(1.06)">6</span></div>
</div>

<!-- CV -->
<div class="card" style="left:648px;top:469px;width:155px;height:145px">
  <div class="hd"><span>CV</span></div>
<div class="cvb" style="top:51px"><svg width="14" height="14" viewBox="0 0 24 24" style="left:40px;top:6px" fill="none" stroke="#ececec" stroke-width="2.2" stroke-linecap="round" stroke-linejoin="round"><path d="M12 3H5a2 2 0 0 0-2 2v14a2 2 0 0 0 2 2h14a2 2 0 0 0 2-2v-7"/><path d="M21 3l-9 9"/><path d="M15 3h6v6"/></svg><span style="left:68px;top:0">View</span></div><div class="cvb" style="top:87px"><svg width="17" height="13" viewBox="0 0 17 13" style="left:25px;top:7px" fill="none" stroke="#ececec" stroke-width="1.1" stroke-linejoin="round"><path d="M4 12.2H13.2C15.2 12.2 16.4 10.9 16.4 9.2C16.4 7.6 15.2 6.4 13.7 6.3C13.4 3.3 11.2 1 8.5 1C5.9 1 3.8 3.1 3.5 5.8C1.8 6.1 0.6 7.5 0.6 9.1C0.6 10.9 2 12.2 4 12.2Z"/><path d="M8.5 4.8V9.6M6.6 7.8L8.5 9.7L10.4 7.8" stroke-width="1.2"/></svg><span style="left:53px;top:0;font-size:12.9px">Download</span></div>

</div>

<!-- Github -->
<div class="card" style="left:477px;top:634px;width:671px;height:200px">
  <div class="hd"><span>Github Contributions: 2024 - Present</span><span class="r" style="font-size:12.55px">Visit Github</span></div>
<div class="abs" style="left:8px;top:49px;width:653px;height:200px;overflow:hidden">
<div style="position:absolute;left:0;top:0.5px;height:15px;width:700px;font-size:12.6px;line-height:15px;color:#e8e8e8;white-space:nowrap"><span style="position:absolute;left:13px;top:0">May</span><span style="position:absolute;left:65px;top:0">Jun</span><span style="position:absolute;left:130px;top:0">Jul</span><span style="position:absolute;left:182px;top:0">Aug</span><span style="position:absolute;left:247px;top:0">Sep</span><span style="position:absolute;left:299px;top:0">Oct</span><span style="position:absolute;left:351px;top:0">Nov</span><span style="position:absolute;left:416px;top:0">Dec</span><span style="position:absolute;left:468px;top:0">Jan</span><span style="position:absolute;left:520px;top:0">Feb</span><span style="position:absolute;left:572px;top:0">Mar</span><span style="position:absolute;left:637px;top:0">Apr</span></div>
<svg style="position:absolute;left:0;top:22px" width="663" height="91" viewBox="0 0 663 91"><rect x="0" y="0" width="9" height="9" rx="2" fill="#006d32"/><rect x="13" y="0" width="9" height="9" rx="2" fill="#006d32"/><rect x="26" y="0" width="9" height="9" rx="2" fill="#39d353"/><rect x="39" y="0" width="9" height="9" rx="2" fill="#006d32"/><rect x="52" y="0" width="9" height="9" rx="2" fill="#0e4429"/><rect x="65" y="0" width="9" height="9" rx="2" fill="#006d32"/><rect x="78" y="0" width="9" height="9" rx="2" fill="#0e4429"/><rect x="91" y="0" width="9" height="9" rx="2" fill="#006d32"/><rect x="104" y="0" width="9" height="9" rx="2" fill="#0e4429"/><rect x="117" y="0" width="9" height="9" rx="2" fill="#161b22"/><rect x="130" y="0" width="9" height="9" rx="2" fill="#0e4429"/><rect x="143" y="0" width="9" height="9" rx="2" fill="#0e4429"/><rect x="156" y="0" width="9" height="9" rx="2" fill="#26a641"/><rect x="169" y="0" width="9" height="9" rx="2" fill="#0e4429"/><rect x="182" y="0" width="9" height="9" rx="2" fill="#0e4429"/><rect x="195" y="0" width="9" height="9" rx="2" fill="#0e4429"/><rect x="208" y="0" width="9" height="9" rx="2" fill="#006d32"/><rect x="221" y="0" width="9" height="9" rx="2" fill="#0e4429"/><rect x="234" y="0" width="9" height="9" rx="2" fill="#0e4429"/><rect x="247" y="0" width="9" height="9" rx="2" fill="#161b22"/><rect x="260" y="0" width="9" height="9" rx="2" fill="#0e4429"/><rect x="273" y="0" width="9" height="9" rx="2" fill="#0e4429"/><rect x="286" y="0" width="9" height="9" rx="2" fill="#006d32"/><rect x="299" y="0" width="9" height="9" rx="2" fill="#006d32"/><rect x="312" y="0" width="9" height="9" rx="2" fill="#0e4429"/><rect x="325" y="0" width="9" height="9" rx="2" fill="#006d32"/><rect x="338" y="0" width="9" height="9" rx="2" fill="#0e4429"/><rect x="351" y="0" width="9" height="9" rx="2" fill="#0e4429"/><rect x="364" y="0" width="9" height="9" rx="2" fill="#006d32"/><rect x="377" y="0" width="9" height="9" rx="2" fill="#26a641"/><rect x="390" y="0" width="9" height="9" rx="2" fill="#0e4429"/><rect x="403" y="0" width="9" height="9" rx="2" fill="#006d32"/><rect x="416" y="0" width="9" height="9" rx="2" fill="#0e4429"/><rect x="429" y="0" width="9" height="9" rx="2" fill="#0e4429"/><rect x="442" y="0" width="9" height="9" rx="2" fill="#161b22"/><rect x="455" y="0" width="9" height="9" rx="2" fill="#0e4429"/><rect x="468" y="0" width="9" height="9" rx="2" fill="#0e4429"/><rect x="481" y="0" width="9" height="9" rx="2" fill="#161b22"/><rect x="494" y="0" width="9" height="9" rx="2" fill="#006d32"/><rect x="507" y="0" width="9" height="9" rx="2" fill="#0e4429"/><rect x="520" y="0" width="9" height="9" rx="2" fill="#0e4429"/><rect x="533" y="0" width="9" height="9" rx="2" fill="#0e4429"/><rect x="546" y="0" width="9" height="9" rx="2" fill="#0e4429"/><rect x="559" y="0" width="9" height="9" rx="2" fill="#0e4429"/><rect x="572" y="0" width="9" height="9" rx="2" fill="#0e4429"/><rect x="585" y="0" width="9" height="9" rx="2" fill="#161b22"/><rect x="598" y="0" width="9" height="9" rx="2" fill="#0e4429"/><rect x="611" y="0" width="9" height="9" rx="2" fill="#161b22"/><rect x="624" y="0" width="9" height="9" rx="2" fill="#0e4429"/><rect x="637" y="0" width="9" height="9" rx="2" fill="#006d32"/><rect x="650" y="0" width="9" height="9" rx="2" fill="#0e4429"/><rect x="0" y="13" width="9" height="9" rx="2" fill="#26a641"/><rect x="13" y="13" width="9" height="9" rx="2" fill="#006d32"/><rect x="26" y="13" width="9" height="9" rx="2" fill="#006d32"/><rect x="39" y="13" width="9" height="9" rx="2" fill="#26a641"/><rect x="52" y="13" width="9" height="9" rx="2" fill="#006d32"/><rect x="65" y="13" width="9" height="9" rx="2" fill="#006d32"/><rect x="78" y="13" width="9" height="9" rx="2" fill="#006d32"/><rect x="91" y="13" width="9" height="9" rx="2" fill="#26a641"/><rect x="104" y="13" width="9" height="9" rx="2" fill="#39d353"/><rect x="117" y="13" width="9" height="9" rx="2" fill="#006d32"/><rect x="130" y="13" width="9" height="9" rx="2" fill="#006d32"/><rect x="143" y="13" width="9" height="9" rx="2" fill="#006d32"/><rect x="156" y="13" width="9" height="9" rx="2" fill="#006d32"/><rect x="169" y="13" width="9" height="9" rx="2" fill="#0e4429"/><rect x="182" y="13" width="9" height="9" rx="2" fill="#006d32"/><rect x="195" y="13" width="9" height="9" rx="2" fill="#26a641"/><rect x="208" y="13" width="9" height="9" rx="2" fill="#006d32"/><rect x="221" y="13" width="9" height="9" rx="2" fill="#006d32"/><rect x="234" y="13" width="9" height="9" rx="2" fill="#006d32"/><rect x="247" y="13" width="9" height="9" rx="2" fill="#0e4429"/><rect x="260" y="13" width="9" height="9" rx="2" fill="#0e4429"/><rect x="273" y="13" width="9" height="9" rx="2" fill="#0e4429"/><rect x="286" y="13" width="9" height="9" rx="2" fill="#006d32"/><rect x="299" y="13" width="9" height="9" rx="2" fill="#26a641"/><rect x="312" y="13" width="9" height="9" rx="2" fill="#006d32"/><rect x="325" y="13" width="9" height="9" rx="2" fill="#006d32"/><rect x="338" y="13" width="9" height="9" rx="2" fill="#006d32"/><rect x="351" y="13" width="9" height="9" rx="2" fill="#006d32"/><rect x="364" y="13" width="9" height="9" rx="2" fill="#006d32"/><rect x="377" y="13" width="9" height="9" rx="2" fill="#006d32"/><rect x="390" y="13" width="9" height="9" rx="2" fill="#0e4429"/><rect x="403" y="13" width="9" height="9" rx="2" fill="#006d32"/><rect x="416" y="13" width="9" height="9" rx="2" fill="#0e4429"/><rect x="429" y="13" width="9" height="9" rx="2" fill="#26a641"/><rect x="442" y="13" width="9" height="9" rx="2" fill="#0e4429"/><rect x="455" y="13" width="9" height="9" rx="2" fill="#0e4429"/><rect x="468" y="13" width="9" height="9" rx="2" fill="#0e4429"/><rect x="481" y="13" width="9" height="9" rx="2" fill="#006d32"/><rect x="494" y="13" width="9" height="9" rx="2" fill="#006d32"/><rect x="507" y="13" width="9" height="9" rx="2" fill="#006d32"/><rect x="520" y="13" width="9" height="9" rx="2" fill="#0e4429"/><rect x="533" y="13" width="9" height="9" rx="2" fill="#0e4429"/><rect x="546" y="13" width="9" height="9" rx="2" fill="#0e4429"/><rect x="559" y="13" width="9" height="9" rx="2" fill="#006d32"/><rect x="572" y="13" width="9" height="9" rx="2" fill="#0e4429"/><rect x="585" y="13" width="9" height="9" rx="2" fill="#0e4429"/><rect x="598" y="13" width="9" height="9" rx="2" fill="#26a641"/><rect x="611" y="13" width="9" height="9" rx="2" fill="#0e4429"/><rect x="624" y="13" width="9" height="9" rx="2" fill="#0e4429"/><rect x="637" y="13" width="9" height="9" rx="2" fill="#0e4429"/><rect x="650" y="13" width="9" height="9" rx="2" fill="#26a641"/><rect x="0" y="26" width="9" height="9" rx="2" fill="#39d353"/><rect x="13" y="26" width="9" height="9" rx="2" fill="#006d32"/><rect x="26" y="26" width="9" height="9" rx="2" fill="#26a641"/><rect x="39" y="26" width="9" height="9" rx="2" fill="#0e4429"/><rect x="52" y="26" width="9" height="9" rx="2" fill="#0e4429"/><rect x="65" y="26" width="9" height="9" rx="2" fill="#006d32"/><rect x="78" y="26" width="9" height="9" rx="2" fill="#39d353"/><rect x="91" y="26" width="9" height="9" rx="2" fill="#0e4429"/><rect x="104" y="26" width="9" height="9" rx="2" fill="#006d32"/><rect x="117" y="26" width="9" height="9" rx="2" fill="#006d32"/><rect x="130" y="26" width="9" height="9" rx="2" fill="#006d32"/><rect x="143" y="26" width="9" height="9" rx="2" fill="#0e4429"/><rect x="156" y="26" width="9" height="9" rx="2" fill="#006d32"/><rect x="169" y="26" width="9" height="9" rx="2" fill="#006d32"/><rect x="182" y="26" width="9" height="9" rx="2" fill="#26a641"/><rect x="195" y="26" width="9" height="9" rx="2" fill="#26a641"/><rect x="208" y="26" width="9" height="9" rx="2" fill="#0e4429"/><rect x="221" y="26" width="9" height="9" rx="2" fill="#006d32"/><rect x="234" y="26" width="9" height="9" rx="2" fill="#26a641"/><rect x="247" y="26" width="9" height="9" rx="2" fill="#006d32"/><rect x="260" y="26" width="9" height="9" rx="2" fill="#006d32"/><rect x="273" y="26" width="9" height="9" rx="2" fill="#0e4429"/><rect x="286" y="26" width="9" height="9" rx="2" fill="#0e4429"/><rect x="299" y="26" width="9" height="9" rx="2" fill="#39d353"/><rect x="312" y="26" width="9" height="9" rx="2" fill="#39d353"/><rect x="325" y="26" width="9" height="9" rx="2" fill="#006d32"/><rect x="338" y="26" width="9" height="9" rx="2" fill="#006d32"/><rect x="351" y="26" width="9" height="9" rx="2" fill="#006d32"/><rect x="364" y="26" width="9" height="9" rx="2" fill="#006d32"/><rect x="377" y="26" width="9" height="9" rx="2" fill="#0e4429"/><rect x="390" y="26" width="9" height="9" rx="2" fill="#0e4429"/><rect x="403" y="26" width="9" height="9" rx="2" fill="#0e4429"/><rect x="416" y="26" width="9" height="9" rx="2" fill="#006d32"/><rect x="429" y="26" width="9" height="9" rx="2" fill="#0e4429"/><rect x="442" y="26" width="9" height="9" rx="2" fill="#0e4429"/><rect x="455" y="26" width="9" height="9" rx="2" fill="#0e4429"/><rect x="468" y="26" width="9" height="9" rx="2" fill="#0e4429"/><rect x="481" y="26" width="9" height="9" rx="2" fill="#006d32"/><rect x="494" y="26" width="9" height="9" rx="2" fill="#0e4429"/><rect x="507" y="26" width="9" height="9" rx="2" fill="#0e4429"/><rect x="520" y="26" width="9" height="9" rx="2" fill="#0e4429"/><rect x="533" y="26" width="9" height="9" rx="2" fill="#0e4429"/><rect x="546" y="26" width="9" height="9" rx="2" fill="#0e4429"/><rect x="559" y="26" width="9" height="9" rx="2" fill="#0e4429"/><rect x="572" y="26" width="9" height="9" rx="2" fill="#0e4429"/><rect x="585" y="26" width="9" height="9" rx="2" fill="#0e4429"/><rect x="598" y="26" width="9" height="9" rx="2" fill="#0e4429"/><rect x="611" y="26" width="9" height="9" rx="2" fill="#0e4429"/><rect x="624" y="26" width="9" height="9" rx="2" fill="#26a641"/><rect x="637" y="26" width="9" height="9" rx="2" fill="#006d32"/><rect x="650" y="26" width="9" height="9" rx="2" fill="#006d32"/><rect x="0" y="39" width="9" height="9" rx="2" fill="#39d353"/><rect x="13" y="39" width="9" height="9" rx="2" fill="#0e4429"/><rect x="26" y="39" width="9" height="9" rx="2" fill="#006d32"/><rect x="39" y="39" width="9" height="9" rx="2" fill="#0e4429"/><rect x="52" y="39" width="9" height="9" rx="2" fill="#0e4429"/><rect x="65" y="39" width="9" height="9" rx="2" fill="#0e4429"/><rect x="78" y="39" width="9" height="9" rx="2" fill="#39d353"/><rect x="91" y="39" width="9" height="9" rx="2" fill="#006d32"/><rect x="104" y="39" width="9" height="9" rx="2" fill="#006d32"/><rect x="117" y="39" width="9" height="9" rx="2" fill="#0e4429"/><rect x="130" y="39" width="9" height="9" rx="2" fill="#006d32"/><rect x="143" y="39" width="9" height="9" rx="2" fill="#006d32"/><rect x="156" y="39" width="9" height="9" rx="2" fill="#26a641"/><rect x="169" y="39" width="9" height="9" rx="2" fill="#006d32"/><rect x="182" y="39" width="9" height="9" rx="2" fill="#006d32"/><rect x="195" y="39" width="9" height="9" rx="2" fill="#006d32"/><rect x="208" y="39" width="9" height="9" rx="2" fill="#006d32"/><rect x="221" y="39" width="9" height="9" rx="2" fill="#39d353"/><rect x="234" y="39" width="9" height="9" rx="2" fill="#006d32"/><rect x="247" y="39" width="9" height="9" rx="2" fill="#0e4429"/><rect x="260" y="39" width="9" height="9" rx="2" fill="#006d32"/><rect x="273" y="39" width="9" height="9" rx="2" fill="#26a641"/><rect x="286" y="39" width="9" height="9" rx="2" fill="#0e4429"/><rect x="299" y="39" width="9" height="9" rx="2" fill="#0e4429"/><rect x="312" y="39" width="9" height="9" rx="2" fill="#006d32"/><rect x="325" y="39" width="9" height="9" rx="2" fill="#006d32"/><rect x="338" y="39" width="9" height="9" rx="2" fill="#39d353"/><rect x="351" y="39" width="9" height="9" rx="2" fill="#0e4429"/><rect x="364" y="39" width="9" height="9" rx="2" fill="#0e4429"/><rect x="377" y="39" width="9" height="9" rx="2" fill="#006d32"/><rect x="390" y="39" width="9" height="9" rx="2" fill="#39d353"/><rect x="403" y="39" width="9" height="9" rx="2" fill="#006d32"/><rect x="416" y="39" width="9" height="9" rx="2" fill="#26a641"/><rect x="429" y="39" width="9" height="9" rx="2" fill="#26a641"/><rect x="442" y="39" width="9" height="9" rx="2" fill="#0e4429"/><rect x="455" y="39" width="9" height="9" rx="2" fill="#006d32"/><rect x="468" y="39" width="9" height="9" rx="2" fill="#0e4429"/><rect x="481" y="39" width="9" height="9" rx="2" fill="#006d32"/><rect x="494" y="39" width="9" height="9" rx="2" fill="#006d32"/><rect x="507" y="39" width="9" height="9" rx="2" fill="#26a641"/><rect x="520" y="39" width="9" height="9" rx="2" fill="#0e4429"/><rect x="533" y="39" width="9" height="9" rx="2" fill="#0e4429"/><rect x="546" y="39" width="9" height="9" rx="2" fill="#0e4429"/><rect x="559" y="39" width="9" height="9" rx="2" fill="#0e4429"/><rect x="572" y="39" width="9" height="9" rx="2" fill="#0e4429"/><rect x="585" y="39" width="9" height="9" rx="2" fill="#0e4429"/><rect x="598" y="39" width="9" height="9" rx="2" fill="#0e4429"/><rect x="611" y="39" width="9" height="9" rx="2" fill="#26a641"/><rect x="624" y="39" width="9" height="9" rx="2" fill="#0e4429"/><rect x="637" y="39" width="9" height="9" rx="2" fill="#0e4429"/><rect x="650" y="39" width="9" height="9" rx="2" fill="#0e4429"/><rect x="0" y="52" width="9" height="9" rx="2" fill="#0e4429"/><rect x="13" y="52" width="9" height="9" rx="2" fill="#0e4429"/><rect x="26" y="52" width="9" height="9" rx="2" fill="#006d32"/><rect x="39" y="52" width="9" height="9" rx="2" fill="#0e4429"/><rect x="52" y="52" width="9" height="9" rx="2" fill="#006d32"/><rect x="65" y="52" width="9" height="9" rx="2" fill="#0e4429"/><rect x="78" y="52" width="9" height="9" rx="2" fill="#0e4429"/><rect x="91" y="52" width="9" height="9" rx="2" fill="#006d32"/><rect x="104" y="52" width="9" height="9" rx="2" fill="#0e4429"/><rect x="117" y="52" width="9" height="9" rx="2" fill="#26a641"/><rect x="130" y="52" width="9" height="9" rx="2" fill="#006d32"/><rect x="143" y="52" width="9" height="9" rx="2" fill="#006d32"/><rect x="156" y="52" width="9" height="9" rx="2" fill="#0e4429"/><rect x="169" y="52" width="9" height="9" rx="2" fill="#26a641"/><rect x="182" y="52" width="9" height="9" rx="2" fill="#0e4429"/><rect x="195" y="52" width="9" height="9" rx="2" fill="#0e4429"/><rect x="208" y="52" width="9" height="9" rx="2" fill="#26a641"/><rect x="221" y="52" width="9" height="9" rx="2" fill="#006d32"/><rect x="234" y="52" width="9" height="9" rx="2" fill="#39d353"/><rect x="247" y="52" width="9" height="9" rx="2" fill="#0e4429"/><rect x="260" y="52" width="9" height="9" rx="2" fill="#006d32"/><rect x="273" y="52" width="9" height="9" rx="2" fill="#0e4429"/><rect x="286" y="52" width="9" height="9" rx="2" fill="#26a641"/><rect x="299" y="52" width="9" height="9" rx="2" fill="#006d32"/><rect x="312" y="52" width="9" height="9" rx="2" fill="#006d32"/><rect x="325" y="52" width="9" height="9" rx="2" fill="#006d32"/><rect x="338" y="52" width="9" height="9" rx="2" fill="#26a641"/><rect x="351" y="52" width="9" height="9" rx="2" fill="#26a641"/><rect x="364" y="52" width="9" height="9" rx="2" fill="#006d32"/><rect x="377" y="52" width="9" height="9" rx="2" fill="#0e4429"/><rect x="390" y="52" width="9" height="9" rx="2" fill="#006d32"/><rect x="403" y="52" width="9" height="9" rx="2" fill="#0e4429"/><rect x="416" y="52" width="9" height="9" rx="2" fill="#006d32"/><rect x="429" y="52" width="9" height="9" rx="2" fill="#006d32"/><rect x="442" y="52" width="9" height="9" rx="2" fill="#161b22"/><rect x="455" y="52" width="9" height="9" rx="2" fill="#161b22"/><rect x="468" y="52" width="9" height="9" rx="2" fill="#0e4429"/><rect x="481" y="52" width="9" height="9" rx="2" fill="#26a641"/><rect x="494" y="52" width="9" height="9" rx="2" fill="#006d32"/><rect x="507" y="52" width="9" height="9" rx="2" fill="#0e4429"/><rect x="520" y="52" width="9" height="9" rx="2" fill="#0e4429"/><rect x="533" y="52" width="9" height="9" rx="2" fill="#006d32"/><rect x="546" y="52" width="9" height="9" rx="2" fill="#0e4429"/><rect x="559" y="52" width="9" height="9" rx="2" fill="#0e4429"/><rect x="572" y="52" width="9" height="9" rx="2" fill="#0e4429"/><rect x="585" y="52" width="9" height="9" rx="2" fill="#0e4429"/><rect x="598" y="52" width="9" height="9" rx="2" fill="#0e4429"/><rect x="611" y="52" width="9" height="9" rx="2" fill="#0e4429"/><rect x="624" y="52" width="9" height="9" rx="2" fill="#0e4429"/><rect x="637" y="52" width="9" height="9" rx="2" fill="#0e4429"/><rect x="650" y="52" width="9" height="9" rx="2" fill="#0e4429"/><rect x="0" y="65" width="9" height="9" rx="2" fill="#006d32"/><rect x="13" y="65" width="9" height="9" rx="2" fill="#0e4429"/><rect x="26" y="65" width="9" height="9" rx="2" fill="#0e4429"/><rect x="39" y="65" width="9" height="9" rx="2" fill="#26a641"/><rect x="52" y="65" width="9" height="9" rx="2" fill="#0e4429"/><rect x="65" y="65" width="9" height="9" rx="2" fill="#0e4429"/><rect x="78" y="65" width="9" height="9" rx="2" fill="#0e4429"/><rect x="91" y="65" width="9" height="9" rx="2" fill="#006d32"/><rect x="104" y="65" width="9" height="9" rx="2" fill="#0e4429"/><rect x="117" y="65" width="9" height="9" rx="2" fill="#0e4429"/><rect x="130" y="65" width="9" height="9" rx="2" fill="#006d32"/><rect x="143" y="65" width="9" height="9" rx="2" fill="#26a641"/><rect x="156" y="65" width="9" height="9" rx="2" fill="#26a641"/><rect x="169" y="65" width="9" height="9" rx="2" fill="#006d32"/><rect x="182" y="65" width="9" height="9" rx="2" fill="#0e4429"/><rect x="195" y="65" width="9" height="9" rx="2" fill="#006d32"/><rect x="208" y="65" width="9" height="9" rx="2" fill="#26a641"/><rect x="221" y="65" width="9" height="9" rx="2" fill="#006d32"/><rect x="234" y="65" width="9" height="9" rx="2" fill="#0e4429"/><rect x="247" y="65" width="9" height="9" rx="2" fill="#006d32"/><rect x="260" y="65" width="9" height="9" rx="2" fill="#006d32"/><rect x="273" y="65" width="9" height="9" rx="2" fill="#0e4429"/><rect x="286" y="65" width="9" height="9" rx="2" fill="#006d32"/><rect x="299" y="65" width="9" height="9" rx="2" fill="#006d32"/><rect x="312" y="65" width="9" height="9" rx="2" fill="#006d32"/><rect x="325" y="65" width="9" height="9" rx="2" fill="#006d32"/><rect x="338" y="65" width="9" height="9" rx="2" fill="#0e4429"/><rect x="351" y="65" width="9" height="9" rx="2" fill="#006d32"/><rect x="364" y="65" width="9" height="9" rx="2" fill="#006d32"/><rect x="377" y="65" width="9" height="9" rx="2" fill="#006d32"/><rect x="390" y="65" width="9" height="9" rx="2" fill="#0e4429"/><rect x="403" y="65" width="9" height="9" rx="2" fill="#0e4429"/><rect x="416" y="65" width="9" height="9" rx="2" fill="#0e4429"/><rect x="429" y="65" width="9" height="9" rx="2" fill="#006d32"/><rect x="442" y="65" width="9" height="9" rx="2" fill="#0e4429"/><rect x="455" y="65" width="9" height="9" rx="2" fill="#0e4429"/><rect x="468" y="65" width="9" height="9" rx="2" fill="#0e4429"/><rect x="481" y="65" width="9" height="9" rx="2" fill="#39d353"/><rect x="494" y="65" width="9" height="9" rx="2" fill="#0e4429"/><rect x="507" y="65" width="9" height="9" rx="2" fill="#161b22"/><rect x="520" y="65" width="9" height="9" rx="2" fill="#0e4429"/><rect x="533" y="65" width="9" height="9" rx="2" fill="#0e4429"/><rect x="546" y="65" width="9" height="9" rx="2" fill="#0e4429"/><rect x="559" y="65" width="9" height="9" rx="2" fill="#161b22"/><rect x="572" y="65" width="9" height="9" rx="2" fill="#0e4429"/><rect x="585" y="65" width="9" height="9" rx="2" fill="#0e4429"/><rect x="598" y="65" width="9" height="9" rx="2" fill="#0e4429"/><rect x="611" y="65" width="9" height="9" rx="2" fill="#0e4429"/><rect x="624" y="65" width="9" height="9" rx="2" fill="#006d32"/><rect x="637" y="65" width="9" height="9" rx="2" fill="#0e4429"/><rect x="650" y="65" width="9" height="9" rx="2" fill="#006d32"/><rect x="0" y="78" width="9" height="9" rx="2" fill="#006d32"/><rect x="13" y="78" width="9" height="9" rx="2" fill="#0e4429"/><rect x="26" y="78" width="9" height="9" rx="2" fill="#006d32"/><rect x="39" y="78" width="9" height="9" rx="2" fill="#0e4429"/><rect x="52" y="78" width="9" height="9" rx="2" fill="#0e4429"/><rect x="65" y="78" width="9" height="9" rx="2" fill="#161b22"/><rect x="78" y="78" width="9" height="9" rx="2" fill="#26a641"/><rect x="91" y="78" width="9" height="9" rx="2" fill="#0e4429"/><rect x="104" y="78" width="9" height="9" rx="2" fill="#0e4429"/><rect x="117" y="78" width="9" height="9" rx="2" fill="#006d32"/><rect x="130" y="78" width="9" height="9" rx="2" fill="#0e4429"/><rect x="143" y="78" width="9" height="9" rx="2" fill="#161b22"/><rect x="156" y="78" width="9" height="9" rx="2" fill="#006d32"/><rect x="169" y="78" width="9" height="9" rx="2" fill="#0e4429"/><rect x="182" y="78" width="9" height="9" rx="2" fill="#0e4429"/><rect x="195" y="78" width="9" height="9" rx="2" fill="#0e4429"/><rect x="208" y="78" width="9" height="9" rx="2" fill="#0e4429"/><rect x="221" y="78" width="9" height="9" rx="2" fill="#0e4429"/><rect x="234" y="78" width="9" height="9" rx="2" fill="#006d32"/><rect x="247" y="78" width="9" height="9" rx="2" fill="#0e4429"/><rect x="260" y="78" width="9" height="9" rx="2" fill="#006d32"/><rect x="273" y="78" width="9" height="9" rx="2" fill="#0e4429"/><rect x="286" y="78" width="9" height="9" rx="2" fill="#39d353"/><rect x="299" y="78" width="9" height="9" rx="2" fill="#006d32"/><rect x="312" y="78" width="9" height="9" rx="2" fill="#006d32"/><rect x="325" y="78" width="9" height="9" rx="2" fill="#0e4429"/><rect x="338" y="78" width="9" height="9" rx="2" fill="#006d32"/><rect x="351" y="78" width="9" height="9" rx="2" fill="#0e4429"/><rect x="364" y="78" width="9" height="9" rx="2" fill="#006d32"/><rect x="377" y="78" width="9" height="9" rx="2" fill="#0e4429"/><rect x="390" y="78" width="9" height="9" rx="2" fill="#006d32"/><rect x="403" y="78" width="9" height="9" rx="2" fill="#0e4429"/><rect x="416" y="78" width="9" height="9" rx="2" fill="#0e4429"/><rect x="429" y="78" width="9" height="9" rx="2" fill="#0e4429"/><rect x="442" y="78" width="9" height="9" rx="2" fill="#0e4429"/><rect x="455" y="78" width="9" height="9" rx="2" fill="#161b22"/><rect x="468" y="78" width="9" height="9" rx="2" fill="#161b22"/><rect x="481" y="78" width="9" height="9" rx="2" fill="#0e4429"/><rect x="494" y="78" width="9" height="9" rx="2" fill="#0e4429"/><rect x="507" y="78" width="9" height="9" rx="2" fill="#006d32"/><rect x="520" y="78" width="9" height="9" rx="2" fill="#161b22"/><rect x="533" y="78" width="9" height="9" rx="2" fill="#0e4429"/><rect x="546" y="78" width="9" height="9" rx="2" fill="#0e4429"/><rect x="559" y="78" width="9" height="9" rx="2" fill="#0e4429"/><rect x="572" y="78" width="9" height="9" rx="2" fill="#161b22"/><rect x="585" y="78" width="9" height="9" rx="2" fill="#006d32"/><rect x="598" y="78" width="9" height="9" rx="2" fill="#0e4429"/><rect x="611" y="78" width="9" height="9" rx="2" fill="#0e4429"/><rect x="624" y="78" width="9" height="9" rx="2" fill="#0e4429"/><rect x="637" y="78" width="9" height="9" rx="2" fill="#0e4429"/><rect x="650" y="78" width="9" height="9" rx="2" fill="#0e4429"/></svg>
</div>

</div>

<!-- Experiences -->
<div class="card" style="left:823px;top:117px;width:325px;height:319px">
  <div class="hd"><span>My Experiences</span></div>
<div class="row" style="top:43px;border-bottom:1px solid #2a2a2a;"><div class="d" style="width:70px">Oct. 2025<br>Present</div><div class="t">PHP Backend Developer<br><span class="gray">Frontier Dental</span></div></div>
<div class="row" style="top:96px;border-bottom:1px solid #2a2a2a;"><div class="d" style="width:71px">Jan. 2023<br>Feb 2025</div><div class="t">Fullstack Developer<br><span class="gray">Yangaplug</span></div></div>
<div class="row" style="top:149px;border-bottom:1px solid #2a2a2a;"><div class="d" style="width:73px">Dec. 2023<br>Mar 2024</div><div class="t">Fullstack Developer (Contract)<br><span class="gray">Curious Kidz</span></div></div>
<div class="row" style="top:202px;border-bottom:1px solid #2a2a2a;"><div class="d" style="width:72px">Nov. 2022<br>Jan 2024</div><div class="t">Fullstack Developer (Part-time)<br><span class="gray">Forra Finance</span></div></div>
<div class="row" style="top:255px;"><div class="d" style="width:72px">Nov. 2023<br>Jan. 2024</div><div class="t">Fullstack Web Developer<br><span class="gray">KPIE Technology</span></div></div>

</div>

<!-- Education -->
<div class="card" style="left:823px;top:456px;width:325px;height:158px">
  <div class="hd"><span>Education and Certifications</span></div>
<div class="row" style="top:43px;border-bottom:1px solid #2a2a2a;"><div class="d" style="width:71px">Nov. 2019<br>Mar. 2020</div><div class="t">Web Dev. Codex 2019<br><span class="gray">Astratech NG</span></div></div>
<div class="row" style="top:96px;"><div class="d" style="width:70px">Nov. 2018<br>Jun 2021</div><div class="t">National Diploma<br><span class="gray">The Polytechnic Ibadan</span></div></div>

</div>

</body></html>
